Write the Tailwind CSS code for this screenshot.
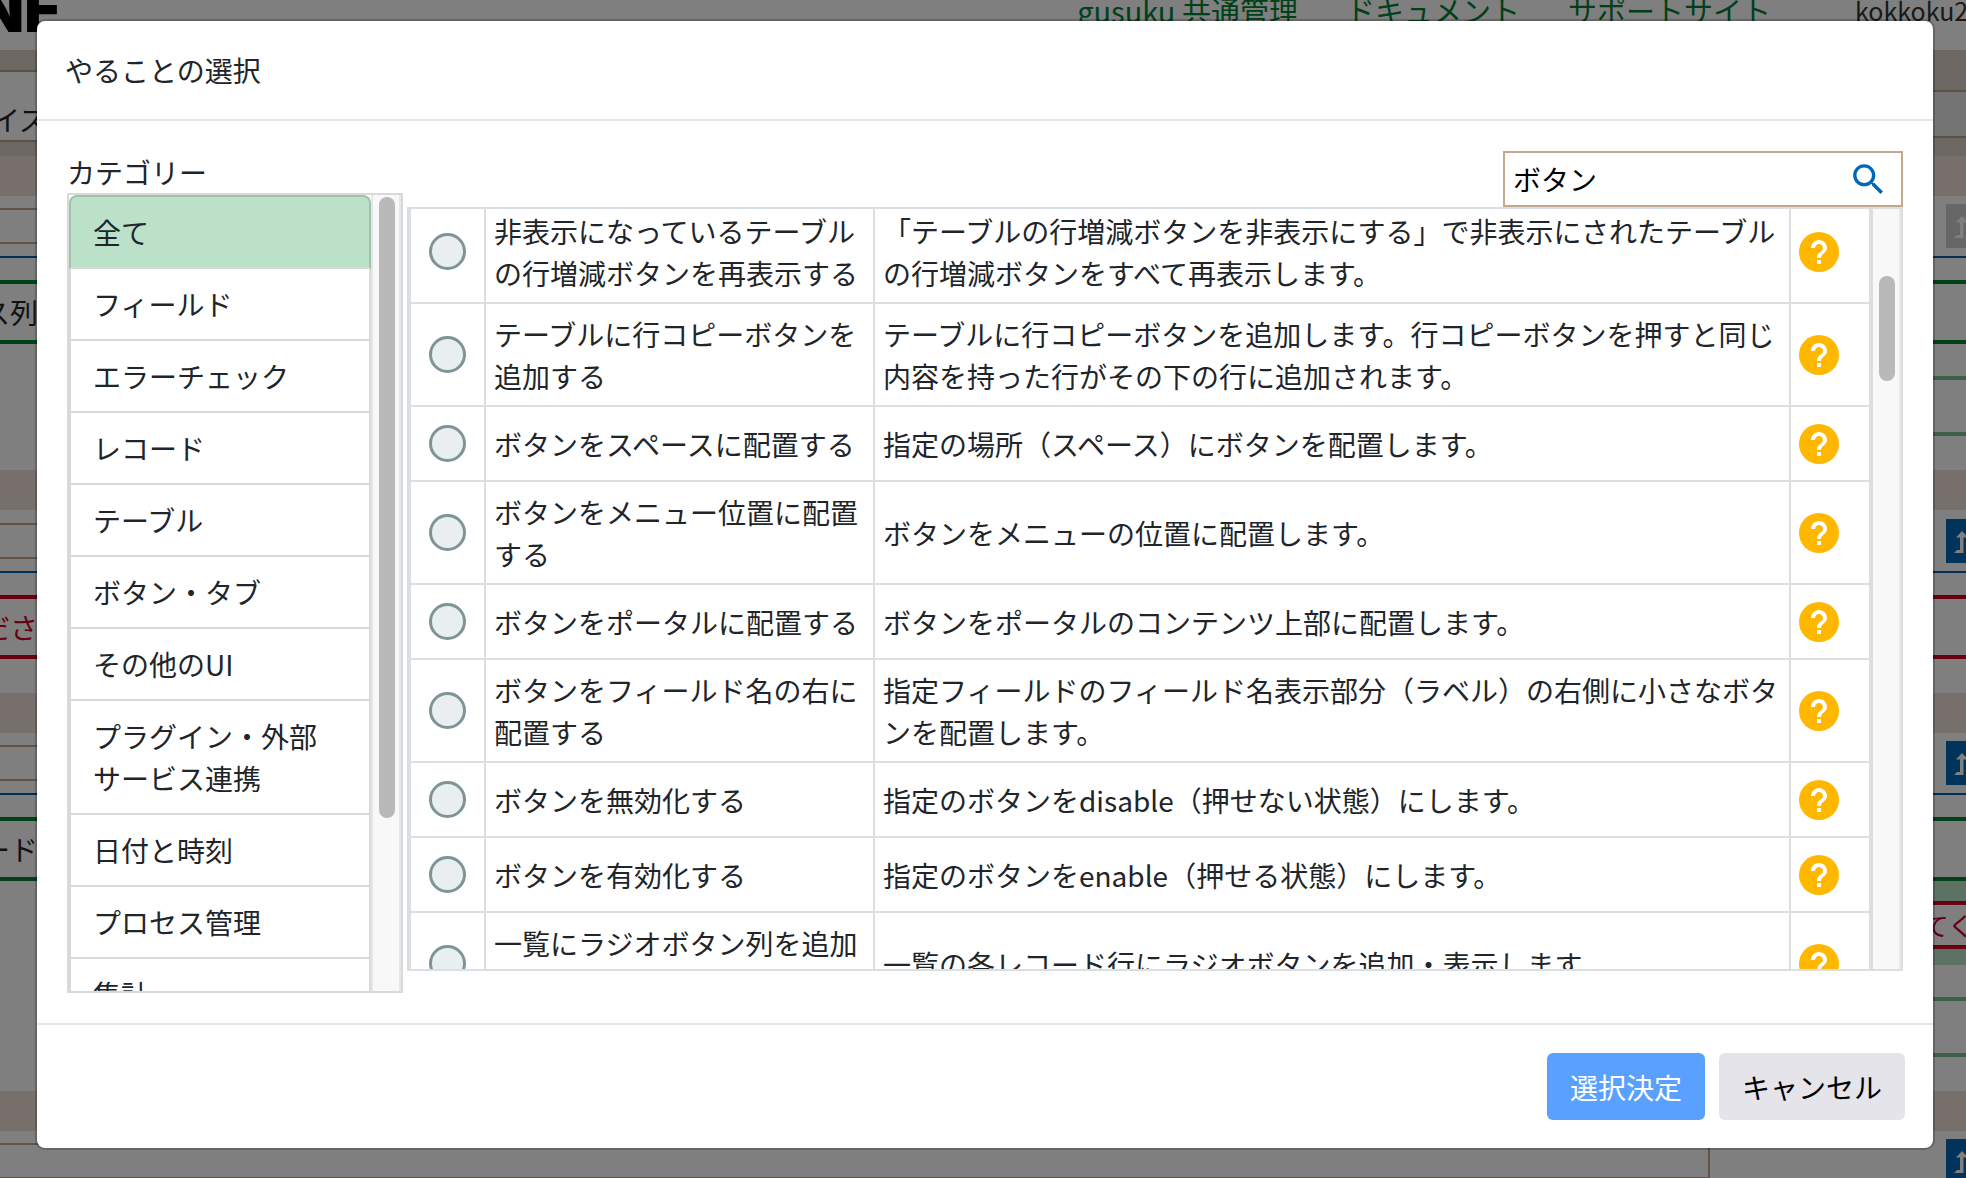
<!DOCTYPE html>
<html lang="ja">
<head>
    <meta charset="UTF-8">
    <meta name="viewport" content="width=device-width, initial-scale=1.0">
    <title>やることの選択</title>
    <script src="https://cdn.jsdelivr.net/npm/@tailwindcss/browser@4"></script>
</head>
<body class="relative h-screen overflow-hidden bg-white font-['Noto_Sans_CJK_JP',sans-serif] text-[28px] leading-[42px] text-[#212529]">

    <svg class="hidden">
        <symbol id="icon-help" viewBox="2 2 20 20">
            <circle cx="12" cy="12" r="10" fill="#ffb700"/>
            <path fill="#fff" d="M11 16h2v2h-2v-2zm1-10c-2.210 0-4 1.790-4 4h2c0-1.100.9-2 2-2s2 .9 2 2c0 2-3 1.750-3 5h2c0-2.250 3-2.500 3-5 0-2.210-1.790-4-4-4z"/>
        </symbol>
        <symbol id="icon-up" viewBox="0 0 44 44">
            <path fill="#fff" d="M16 12l6 6.500h-4.500v15.500H8l3-3h3V18.500H10z"/>
        </symbol>
    </svg>

    <!-- page behind the dialog -->
    <div class="h-screen overflow-hidden" aria-hidden="true">
        <header class="flex h-[50px] items-start overflow-hidden">
            <div class="-mt-4 -ml-[22px] font-['Inter',sans-serif] text-[60px] leading-[52px] font-black text-black">NE</div>
            <nav class="-mr-[49px] -mt-[11px] ml-auto flex shrink-0 gap-12 text-[29px] text-[#008234]">
                <a href="#">gusuku 共通管理</a>
                <a href="#">ドキュメント</a>
                <a href="#">サポートサイト</a>
                <span class="ml-9 w-40 text-[25px] text-[#333]">kokkoku2107</span>
            </nav>
        </header>

        <div class="flex h-[106px] items-start bg-[#d8cec4]">
            <div class="mt-5 flex h-[72px] flex-1 items-end border-y-2 border-[#b8a488] bg-white"><span class="-ml-2">イズ</span></div>
            <div class="mt-10 h-12 flex-1 border-y-2 border-[#b8a488] bg-[#e6e6e6]"></div>
        </div>

        <section class="h-[314px]">
            <div class="h-10 bg-[#ecded8]"></div>
            <div class="flex h-[62px] items-center border-b-2 border-[#0061ae]">
                <div class="-ml-2 mr-[236px] h-9 flex-1 border-2 border-[#c2a88c]"></div>
                <button class="-mr-6 size-11 shrink-0 bg-[#cfcfcf]"><svg class="size-11"><use href="#icon-up"/></svg></button>
            </div>
            <div class="mt-[22px] h-16 border-y-4 border-[#008234] leading-[56px]"><span class="-ml-[18px]">ス列</span></div>
            <div class="mt-8 ml-40 h-[60px] border-y-4 border-[#78c094]"></div>
        </section>

        <section class="h-[223px]">
            <div class="h-10 bg-[#ecded8]"></div>
            <div class="flex h-[63px] items-center border-b-2 border-[#0061ae]">
                <div class="-ml-2 mr-[236px] h-9 flex-1 border-2 border-[#c2a88c]"></div>
                <button class="-mr-6 size-11 shrink-0 bg-[#0068b7]"><svg class="size-11"><use href="#icon-up"/></svg></button>
            </div>
            <div class="mt-[22px] h-16 border-y-4 border-[#d00024] leading-[56px] text-[#d00024]"><span class="-ml-[18px]">ださい</span></div>
        </section>

        <section class="h-[398px]">
            <div class="h-10 bg-[#ecded8]"></div>
            <div class="flex h-[62px] items-center border-b-2 border-[#0061ae]">
                <div class="-ml-2 mr-[236px] h-9 flex-1 border-2 border-[#c2a88c]"></div>
                <button class="-mr-6 size-11 shrink-0 bg-[#0068b7]"><svg class="size-11"><use href="#icon-up"/></svg></button>
            </div>
            <div class="mt-[22px] h-16 border-y-4 border-[#008234] leading-[56px]"><span class="-ml-[18px]">ード</span></div>
            <div class="ml-40 bg-[#bbe2c8] pt-5 pb-4">
                <div class="flex h-12 items-center justify-end border-y-4 border-[#d00024] bg-white text-[26px] text-[#d00024]"><span class="-mr-[86px]">てください</span></div>
            </div>
            <div class="mt-8 ml-40 h-[60px] border-y-4 border-[#78c094]"></div>
        </section>

        <section>
            <div class="h-10 bg-[#ecded8]"></div>
            <div class="flex h-[60px] items-center">
                <div class="-ml-2 mr-[236px] h-9 flex-1 border-2 border-[#c2a88c]"></div>
                <button class="-mr-6 size-11 shrink-0 bg-[#0068b7]"><svg class="size-11"><use href="#icon-up"/></svg></button>
            </div>
        </section>
    </div>

    <!-- dialog -->
    <div class="absolute inset-0 bg-black/50 pt-[19px] pr-[31px] pl-[35px]">
        <div role="dialog" aria-labelledby="dialogTitle" class="rounded-[10px] border-2 border-black/20 bg-white bg-clip-padding">
            <div class="border-b-2 border-[#e3e8ec] px-7 py-7">
                <h1 id="dialogTitle">やることの選択</h1>
            </div>

            <div class="flex gap-1 p-[30px]">
                <div class="w-[336px] shrink-0">
                    <h2>カテゴリー</h2>
                    <div class="flex h-[800px] border-2 border-[#d9d9d9]">
                        <ul id="categoryList" class="flex-1 overflow-hidden"></ul>
                        <div class="w-[30px] border-x-2 border-[#e6e6e6] bg-[#f8f8f8] pt-0.5 pl-1.5">
                            <div class="h-[621px] w-4 rounded-full bg-[#b9b9b9]"></div>
                        </div>
                    </div>
                </div>

                <div class="min-w-0 flex-1">
                    <div class="ml-auto flex h-14 w-[400px] items-center border-2 border-[#c2a88c] pr-3 pl-2">
                        <input type="text" value="ボタン" aria-label="検索" class="min-w-0 flex-1 text-black outline-none">
                        <button aria-label="検索する">
                            <svg class="size-[41px]" viewBox="0 0 24 24" fill="#0068b7"><path d="M15.500 14h-.79l-.28-.27C15.410 12.590 16 11.110 16 9.500 16 5.910 13.090 3 9.500 3S3 5.910 3 9.500 5.910 16 9.500 16c1.610 0 3.090-.59 4.230-1.570l.27.28v.79l5 4.990L20.490 19l-4.990-5zm-6 0C7.010 14 5 11.990 5 9.500S7.010 5 9.500 5 14 7.010 14 9.500 11.990 14 9.500 14z"/></svg>
                        </button>
                    </div>
                    <div class="flex h-[764px] border-2 border-[#d9dfe3]">
                        <div class="min-w-0 flex-1 overflow-hidden">
                            <table class="-mt-2.5 w-full table-fixed border-collapse">
                                <colgroup>
                                    <col class="w-[75px]">
                                    <col class="w-[389px]">
                                    <col>
                                    <col class="w-20">
                                </colgroup>
                                <tbody id="actionRows"></tbody>
                            </table>
                        </div>
                        <div class="w-[30px] border-r-2 border-l-2 border-l-[#d9dfe3] border-r-[#e8e8e8] bg-[#f8f8f8] pt-[67px] pl-1.5">
                            <div class="h-[105px] w-4 rounded-full bg-[#b9b9b9]"></div>
                        </div>
                    </div>
                </div>
            </div>

            <div class="flex justify-end gap-[14px] border-t-2 border-[#e3e8ec] p-7">
                <button class="h-[67px] rounded-md bg-[#5aa1ff] px-[23px] text-white">選択決定</button>
                <button class="h-[67px] rounded-md bg-[#e4e4ea] px-[23px] text-black">キャンセル</button>
            </div>
        </div>
    </div>

    <script>
        const categories = [
            "全て", "フィールド", "エラーチェック", "レコード", "テーブル", "ボタン・タブ",
            "その他のUI", "プラグイン・外部サービス連携", "日付と時刻", "プロセス管理", "集計"
        ];

        const actions = [
            ["非表示になっているテーブルの行増減ボタンを再表示する", "「テーブルの行増減ボタンを非表示にする」で非表示にされたテーブルの行増減ボタンをすべて再表示します。"],
            ["テーブルに行コピーボタンを追加する", "テーブルに行コピーボタンを追加します。行コピーボタンを押すと同じ内容を持った行がその下の行に追加されます。"],
            ["ボタンをスペースに配置する", "指定の場所（スペース）にボタンを配置します。"],
            ["ボタンをメニュー位置に配置する", "ボタンをメニューの位置に配置します。"],
            ["ボタンをポータルに配置する", "ボタンをポータルのコンテンツ上部に配置します。"],
            ["ボタンをフィールド名の右に配置する", "指定フィールドのフィールド名表示部分（ラベル）の右側に小さなボタンを配置します。"],
            ["ボタンを無効化する", "指定のボタンをdisable（押せない状態）にします。"],
            ["ボタンを有効化する", "指定のボタンをenable（押せる状態）にします。"],
            ["一覧にラジオボタン列を追加する", "一覧の各レコード行にラジオボタンを追加・表示します。"]
        ];

        // カテゴリー一覧
        document.getElementById("categoryList").innerHTML = categories.map((name, i) => `
            <li>
                <button class="block w-full border-2 py-[14px] pr-8 pl-[22px] text-left ${i === 0
                    ? "rounded-t-lg border-[#a0c2ac] border-b-[#d9d9d9] bg-[#bbe2c8]"
                    : "border-[#d9d9d9] border-t-0"}">${name}</button>
            </li>
        `).join("");

        // やることの表
        document.getElementById("actionRows").innerHTML = actions.map(([name, text], i) => `
            <tr class="h-[75px]">
                <td class="border-2 border-[#d9dfe3]">
                    <input type="radio" name="action" id="action-${i}" class="mx-auto block size-[37px] appearance-none rounded-full border-[3px] border-[#7f9496] bg-[#e9efee]">
                </td>
                <td class="border-2 border-[#d9dfe3] px-2 pt-[9px] pb-2"><label for="action-${i}">${name}</label></td>
                <td class="border-2 border-[#d9dfe3] px-2 pt-[9px] pb-2">${text}</td>
                <td class="border-2 border-[#d9dfe3] px-2">
                    <a href="#" aria-label="ヘルプ" class="block size-10"><svg class="size-10"><use href="#icon-help"/></svg></a>
                </td>
            </tr>
        `).join("");
    </script>

</body>
</html>
